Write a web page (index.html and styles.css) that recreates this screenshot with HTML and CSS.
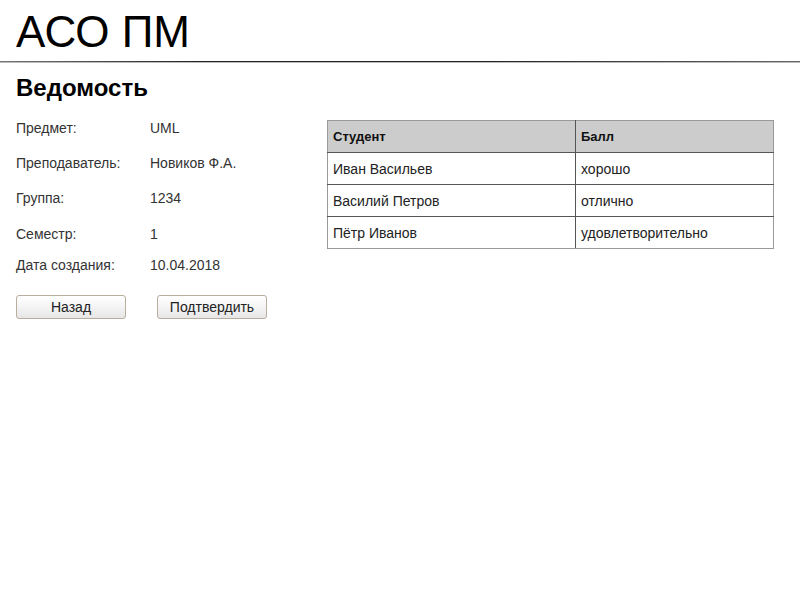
FILE: index.html
```html
<!DOCTYPE html>
<html lang="ru">
<head>
<meta charset="utf-8">
<title>АСО ПМ</title>
<link rel="stylesheet" href="styles.css">
</head>
<body>
<header class="top">
  <h1 class="brand">АСО ПМ</h1>
</header>
<div class="rule"></div>
<main class="page">
  <h2 class="title">Ведомость</h2>
  <div class="content">
    <section class="info">
      <div class="row"><span class="label">Предмет:</span><span class="value">UML</span></div>
      <div class="row"><span class="label">Преподаватель:</span><span class="value">Новиков Ф.А.</span></div>
      <div class="row r3"><span class="label">Группа:</span><span class="value">1234</span></div>
      <div class="row r4"><span class="label">Семестр:</span><span class="value">1</span></div>
      <div class="row r5"><span class="label">Дата создания:</span><span class="value">10.04.2018</span></div>
      <div class="buttons">
        <button class="btn">Назад</button>
        <button class="btn">Подтвердить</button>
      </div>
    </section>
    <table class="grades">
      <thead>
        <tr><th class="c1">Студент</th><th>Балл</th></tr>
      </thead>
      <tbody>
        <tr><td class="c1">Иван Васильев</td><td>хорошо</td></tr>
        <tr><td class="c1">Василий Петров</td><td>отлично</td></tr>
        <tr><td class="c1">Пётр Иванов</td><td>удовлетворительно</td></tr>
      </tbody>
    </table>
  </div>
</main>
</body>
</html>
```

FILE: styles.css
```css
html, body {
  margin: 0;
  padding: 0;
  background: #fff;
  font-family: "Liberation Sans", Arial, sans-serif;
  color: #222;
}
.top {
  padding: 8px 16px 0;
  height: 53px;
  box-sizing: border-box;
}
.brand {
  margin: 0;
  font-weight: normal;
  font-size: 44px;
  line-height: 48px;
  color: #000;
}
.rule {
  height: 1px;
  background: linear-gradient(to right, #777 0%, #222 25%, #222 60%, #666 100%);
  border-bottom: 1px solid #bbb;
  margin-top: 8px;
}
.page {
  padding: 0 16px;
}
.title {
  margin: 11px 0 0;
  font-size: 24px;
  line-height: 28px;
  font-weight: bold;
  color: #000;
}
.content {
  display: flex;
  align-items: flex-start;
  margin-top: 18px;
}
.info {
  width: 311px;
  font-size: 14px;
  color: #333;
}
.row {
  display: flex;
  height: 35px;
  line-height: 16px;
}
.row.r3 {
  height: 36px;
}
.row.r4 {
  height: 31px;
}
.row.r5 {
  height: 38px;
}
.label {
  width: 134px;
}
.buttons {
  display: flex;
  gap: 31px;
}
.btn {
  width: 110px;
  height: 24px;
  padding: 0;
  font-family: "Liberation Sans", Arial, sans-serif;
  font-size: 14px;
  color: #222;
  border: 1px solid #b9ae9e;
  border-radius: 3px;
  background: linear-gradient(to bottom, #ffffff 0%, #f4f4f4 50%, #e6e6e6 100%);
}
.grades {
  margin-top: 0;
  width: 447px;
  border-collapse: collapse;
  font-size: 14px;
  color: #222;
  border: 1px solid #999;
}
.grades th, .grades td {
  height: 31px;
  padding: 0 5px;
  text-align: left;
  border-bottom: 1px solid #555;
}
.grades tbody tr:last-child td {
  border-bottom: 1px solid #999;
}
.grades th {
  background: #cccccc;
  font-size: 13px;
  font-weight: bold;
  color: #111;
}
.grades .c1 {
  width: 237px;
  border-right: 1px solid #555;
}
```
